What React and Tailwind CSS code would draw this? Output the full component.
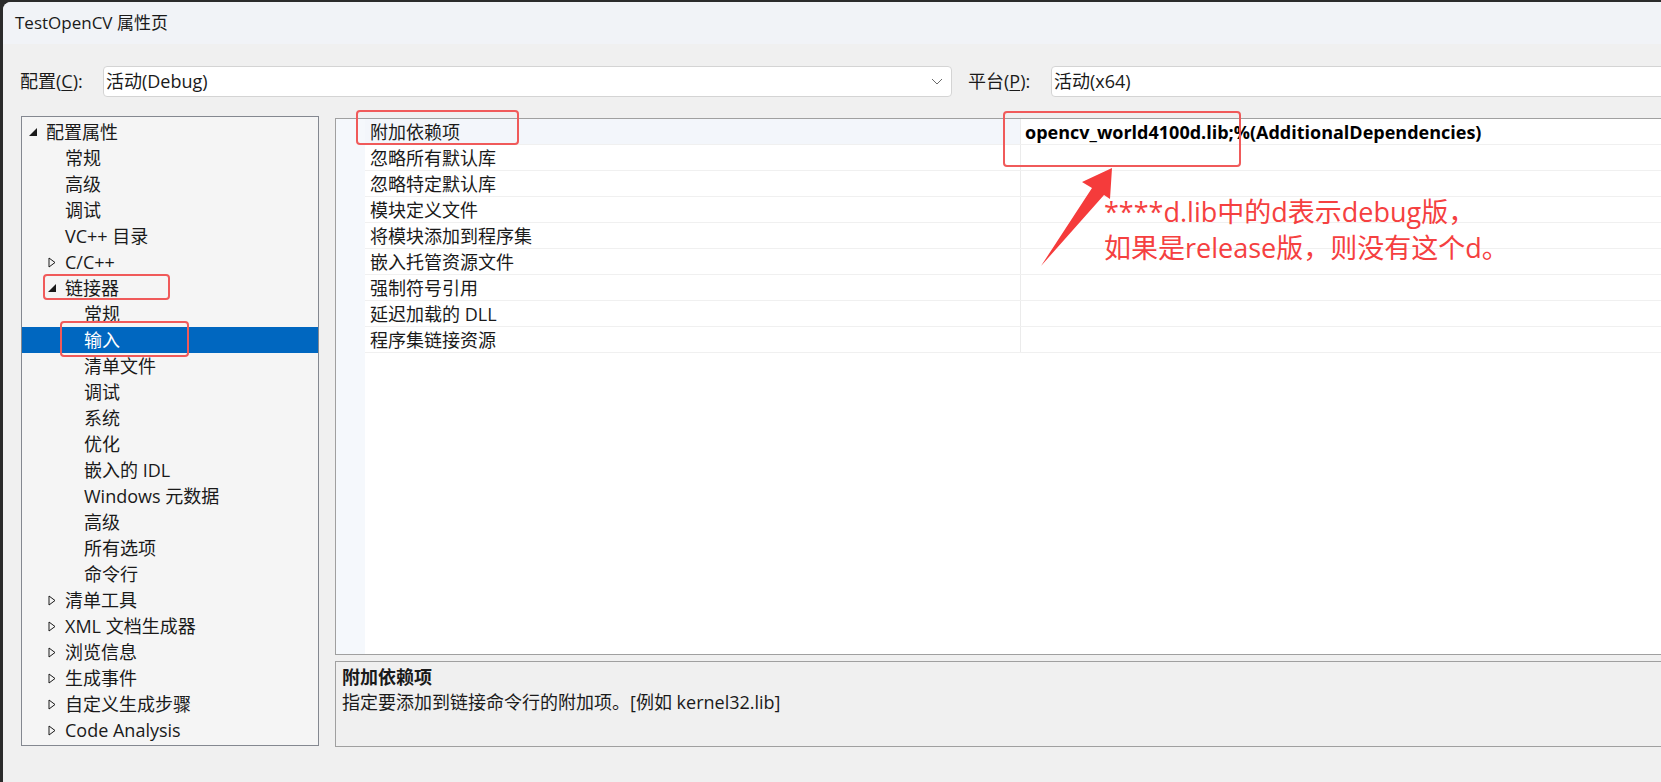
import React from 'react';

// Tree items of the property page (left panel)
const TREE = [
  { label: '配置属性', level: 0, arrow: 'open' },
  { label: '常规', level: 1 },
  { label: '高级', level: 1 },
  { label: '调试', level: 1 },
  { label: 'VC++ 目录', level: 1 },
  { label: 'C/C++', level: 1, arrow: 'closed' },
  { label: '链接器', level: 1, arrow: 'open' },
  { label: '常规', level: 2 },
  { label: '输入', level: 2, selected: true },
  { label: '清单文件', level: 2 },
  { label: '调试', level: 2 },
  { label: '系统', level: 2 },
  { label: '优化', level: 2 },
  { label: '嵌入的 IDL', level: 2 },
  { label: 'Windows 元数据', level: 2 },
  { label: '高级', level: 2 },
  { label: '所有选项', level: 2 },
  { label: '命令行', level: 2 },
  { label: '清单工具', level: 1, arrow: 'closed' },
  { label: 'XML 文档生成器', level: 1, arrow: 'closed' },
  { label: '浏览信息', level: 1, arrow: 'closed' },
  { label: '生成事件', level: 1, arrow: 'closed' },
  { label: '自定义生成步骤', level: 1, arrow: 'closed' },
  { label: 'Code Analysis', level: 1, arrow: 'closed' },
];

const PROPS = [
  { name: '附加依赖项', value: 'opencv_world4100d.lib;%(AdditionalDependencies)', active: true },
  { name: '忽略所有默认库' },
  { name: '忽略特定默认库' },
  { name: '模块定义文件' },
  { name: '将模块添加到程序集' },
  { name: '嵌入托管资源文件' },
  { name: '强制符号引用' },
  { name: '延迟加载的 DLL' },
  { name: '程序集链接资源' },
];

const ArrowOpen = () => (
  <svg width="8" height="8" viewBox="0 0 8 8">
    <polygon points="8,0 8,8 0,8" fill="#1a1a1a" />
  </svg>
);

const ArrowClosed = () => (
  <svg width="8" height="11" viewBox="0 0 8 11">
    <polygon points="1,1 7,5.5 1,10" fill="none" stroke="#1a1a1a" strokeWidth="1" />
  </svg>
);

const TreeRow = ({ item }) => {
  // indent of the arrow and of the text per level
  const pad = item.level === 0 ? 'pl-[7px]' : item.level === 1 ? 'pl-[26px]' : 'pl-[62px]';
  return (
    <div
      className={`h-[26px] flex items-center ${pad} ${
        item.selected ? 'bg-[#0067c0] text-white' : 'text-[#1a1a1a]'
      }`}
    >
      {item.level < 2 && (
        <span className="w-[17px] flex items-center">
          {item.arrow === 'open' && <ArrowOpen />}
          {item.arrow === 'closed' && <ArrowClosed />}
        </span>
      )}
      <span className="leading-[26px]">{item.label}</span>
    </div>
  );
};

const Combo = ({ text, chevron, className }) => (
  <div
    className={`shrink-0 h-[31px] bg-white border border-[#d4d4d4] rounded-[4px] flex items-center pl-[2px] pr-[8px] ${className}`}
  >
    <span className="flex-1">{text}</span>
    {chevron && (
      <svg width="12" height="7" viewBox="0 0 12 7">
        <polyline points="1,1 6,6 11,1" fill="none" stroke="#6a6a6a" strokeWidth="1" />
      </svg>
    )}
  </div>
);

const RedBox = ({ className }) => (
  <div className={`absolute border-2 border-[#f05a5a] rounded-[4px] ${className}`} />
);

export default function App() {
  return (
    <div className="relative w-[1661px] h-[782px] overflow-hidden bg-[#2b2b2b] pt-[2px] pl-[3px] font-['Open_Sans','Noto_Sans_CJK_SC',sans-serif] text-[18px] text-[#1a1a1a]">
      <div className="h-full w-[1700px] bg-[#f0f0f0] rounded-tl-[8px] flex flex-col overflow-hidden">
        {/* Title bar */}
        <div className="h-[42px] bg-[#f1f3f7] flex items-center pl-[12px] text-[17px]">
          TestOpenCV 属性页
        </div>

        {/* Configuration / platform */}
        <div className="mt-[22px] flex items-center pl-[17px]">
          <span className="shrink-0 w-[83px]">
            配置(<span className="underline underline-offset-2">C</span>):
          </span>
          <Combo text="活动(Debug)" chevron className="w-[849px]" />
          <span className="shrink-0 ml-[16px] w-[83px]">
            平台(<span className="underline underline-offset-2">P</span>):
          </span>
          <Combo text="活动(x64)" className="w-[700px]" />
        </div>

        {/* Main area */}
        <div className="mt-[19px] flex pl-[18px] items-start">
          {/* Tree */}
          <div className="shrink-0 w-[298px] h-[630px] bg-[#f5f5f5] border border-[#848890] pt-[2px]">
            {TREE.map((item, i) => (
              <TreeRow key={i} item={item} />
            ))}
          </div>

          <div className="shrink-0 ml-[16px] mt-[2px] w-[1340px] flex flex-col">
            {/* Property grid */}
            <div className="h-[537px] bg-white border border-[#a0a0a0] flex">
              <div className="w-[29px] bg-[#f5f8fc]" />
              <div className="flex-1">
                {PROPS.map((p, i) => (
                  <div key={i} className="h-[26px] flex border-b border-[#f0f0f0]">
                    <div
                      className={`w-[656px] pl-[5px] border-r border-[#ebebeb] leading-[26px] ${
                        p.active ? 'bg-[#f3f6fb]' : ''
                      }`}
                    >
                      {p.name}
                    </div>
                    <div className="flex-1 pl-[4px] leading-[26px] font-bold text-black">
                      {p.value}
                    </div>
                  </div>
                ))}
              </div>
            </div>

            {/* Description */}
            <div className="mt-[6px] h-[86px] bg-[#f0f0f0] border border-[#a0a0a0] pl-[6px] pt-[3px]">
              <div className="font-bold leading-[25px]">附加依赖项</div>
              <div className="leading-[25px]">指定要添加到链接命令行的附加项。[例如 kernel32.lib]</div>
            </div>
          </div>
        </div>
      </div>

      {/* Annotations */}
      <RedBox className="left-[356px] top-[110px] w-[163px] h-[35px]" />
      <RedBox className="left-[1003px] top-[111px] w-[238px] h-[56px]" />
      <RedBox className="left-[43px] top-[274px] w-[127px] h-[26px]" />
      <RedBox className="left-[60px] top-[321px] w-[129px] h-[36px]" />

      <svg className="absolute left-[1030px] top-[160px]" width="95" height="115" viewBox="0 0 95 115">
        <polygon points="11,106 62,28 52,22 82,8 80,39 74,35" fill="#f53b3b" />
      </svg>

      <div className="absolute left-[1104px] top-[194px] text-[27px] leading-[36px] text-[#f54040] whitespace-nowrap">
        <div>****d.lib中的d表示debug版，</div>
        <div>如果是release版，则没有这个d。</div>
      </div>
    </div>
  );
}
